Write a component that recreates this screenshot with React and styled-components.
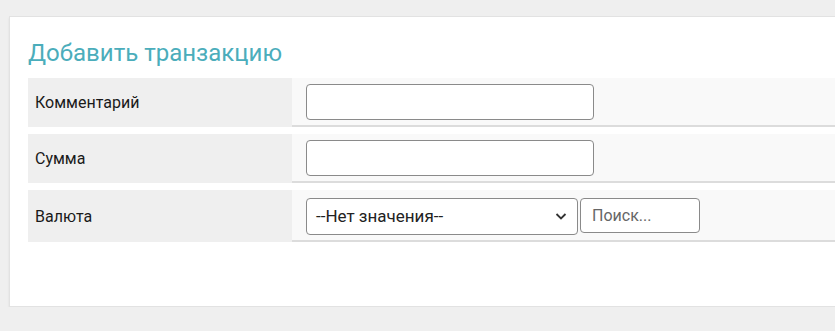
import React from 'react';
import styled, { createGlobalStyle } from 'styled-components';

const GlobalStyle = createGlobalStyle`
  html, body {
    margin: 0;
    padding: 0;
    background: #efefef;
    overflow: hidden;
    font-family: Roboto, "Liberation Sans", sans-serif;
  }
`;

const Page = styled.div`
  padding: 16px 0 0 9px;
  width: 900px;
`;

const Card = styled.div`
  background: #fff;
  border: 1px solid #e2e2e2;
  box-shadow: 0 2px 2px rgba(0, 0, 0, 0.08);
  height: 291px;
  box-sizing: border-box;
  padding: 19px 0 0 18px;
`;

const Title = styled.h3`
  margin: 0 0 8px 0;
  font-size: 24px;
  font-weight: 400;
  line-height: 34px;
  color: #4badbb;
`;

const Table = styled.div`
  display: flex;
  flex-direction: column;
  gap: 7px;
`;

const Row = styled.div`
  display: grid;
  grid-template-columns: 264px 1fr;
  height: ${(p) => p.$height}px;
`;

const Label = styled.div`
  background: #efefef;
  font-size: 16px;
  font-weight: 400;
  color: #1a1a1a;
  padding: 0 0 0 7px;
  display: flex;
  align-items: center;
`;

const Value = styled.div`
  background: #f9f9f9;
  border-bottom: 2px solid #dcdcdc;
  padding: 0 14px;
  display: flex;
  align-items: center;
  gap: 2px;
`;

const TextInput = styled.input`
  box-sizing: border-box;
  width: ${(p) => p.$width}px;
  height: ${(p) => p.$h}px;
  border: 1px solid #8a8a8a;
  border-radius: 4px;
  background: #fff;
  font-family: Roboto, "Liberation Sans", sans-serif;
  font-size: 16px;
  padding: 0 11px;
  color: #222;
  outline: none;
  &::placeholder {
    color: #666;
  }
`;

const SelectBox = styled.div`
  box-sizing: border-box;
  width: 272px;
  height: 37px;
  border: 1px solid #8a8a8a;
  border-radius: 4px;
  background: #fff;
  display: flex;
  align-items: center;
  justify-content: space-between;
  padding: 0 9px 0 9px;
  font-size: 17px;
  color: #222;
  margin-top: 2px;
`;

const rows = [
  { label: 'Комментарий', height: 49 },
  { label: 'Сумма', height: 49 },
];

export default function App() {
  return (
    <Page>
      <GlobalStyle />
      <Card>
        <Title>Добавить транзакцию</Title>
        <Table>
          {rows.map((r) => (
            <Row key={r.label} $height={r.height}>
              <Label>{r.label}</Label>
              <Value>
                <TextInput $width={288} $h={36} />
              </Value>
            </Row>
          ))}
          <Row $height={52}>
            <Label>Валюта</Label>
            <Value>
              <SelectBox>
                <span>--Нет значения--</span>
                <svg width="14" height="14" viewBox="0 0 14 14">
                  <path d="M2.5 5 L7 9.5 L11.5 5" fill="none" stroke="#333" strokeWidth="1.8" />
                </svg>
              </SelectBox>
              <TextInput $width={120} $h={35} placeholder="Поиск..." />
            </Value>
          </Row>
        </Table>
      </Card>
    </Page>
  );
}
